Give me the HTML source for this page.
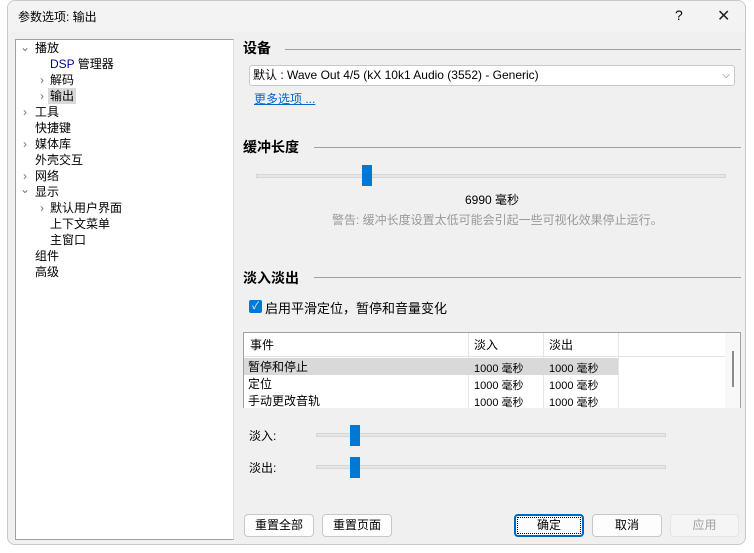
<!DOCTYPE html>
<html><head><meta charset="utf-8"><style>
*{box-sizing:border-box;margin:0;padding:0}
body{width:754px;height:553px;background:#fff;font-family:"Liberation Sans","Noto Sans CJK SC",sans-serif;font-size:12px;color:#000;position:relative;overflow:hidden}
.a{position:absolute}
.win{left:7px;top:0;width:739px;height:545px;background:#f0f0f0;border:1px solid #c8c8c8;border-radius:8px;overflow:hidden}
.title{left:0;top:0;width:100%;height:31px;background:#f3f3f3}
.tree{left:7px;top:38px;width:219px;height:501px;background:#fff;border:1px solid #a0a0a0;border-right-color:#e0e0e0}
.ti{position:absolute;height:16px;line-height:16px;font-size:12px}
.ar{position:absolute;color:#777;font-size:12px;line-height:14px}
.hd{font-weight:bold;font-size:14px}
.line{height:1px;background:#a0a0a0}
.btn{position:absolute;height:23px;border:1px solid #c8c8c8;border-radius:4px;background:#fdfdfd;text-align:center;line-height:21px;font-size:12px}
.track{position:absolute;height:4px;background:#e6e6e6;border:1px solid #d6d6d6}
.thumb{position:absolute;width:10px;height:21px;background:#0078d4}
</style></head><body>
<div class="a win">
 <div class="a title"></div>
 <div class="a" style="left:10px;top:7px;font-size:12px">参数选项: 输出</div>
 <div class="a" style="left:667px;top:6px;font-size:14px">?</div>
 <div class="a" style="left:709px;top:5px;font-size:16px;font-weight:300;color:#222">✕</div>
 <div class="a tree">
  <span class="ar" style="left:4px;top:0px">⌄</span><div class="ti" style="left:19px;top:0px">播放</div>
  <div class="ti" style="left:34px;top:16px"><span style="color:#0000a0">DSP</span> 管理器</div>
  <span class="ar" style="left:24px;top:33px">›</span><div class="ti" style="left:34px;top:32px">解码</div>
  <span class="ar" style="left:24px;top:49px">›</span><div class="ti" style="left:32px;top:48px;background:#d9d9d9;padding:0 2px">输出</div>
  <span class="ar" style="left:7px;top:65px">›</span><div class="ti" style="left:19px;top:64px">工具</div>
  <div class="ti" style="left:19px;top:80px">快捷键</div>
  <span class="ar" style="left:7px;top:97px">›</span><div class="ti" style="left:19px;top:96px">媒体库</div>
  <div class="ti" style="left:19px;top:112px">外壳交互</div>
  <span class="ar" style="left:7px;top:129px">›</span><div class="ti" style="left:19px;top:128px">网络</div>
  <span class="ar" style="left:4px;top:142px">⌄</span><div class="ti" style="left:19px;top:144px">显示</div>
  <span class="ar" style="left:24px;top:161px">›</span><div class="ti" style="left:34px;top:160px">默认用户界面</div>
  <div class="ti" style="left:34px;top:176px">上下文菜单</div>
  <div class="ti" style="left:34px;top:192px">主窗口</div>
  <div class="ti" style="left:19px;top:208px">组件</div>
  <div class="ti" style="left:19px;top:224px">高级</div>
 </div>
 <div class="a hd" style="left:235px;top:37px">设备</div>
 <div class="a line" style="left:277px;top:48px;width:456px"></div>
 <div class="a" style="left:241px;top:64px;width:486px;height:21px;background:#fff;border:1px solid #c8c8c8;border-radius:3px;line-height:19px;padding-left:3px;font-size:12px">默认 : Wave Out 4/5 (kX 10k1 Audio (3552) - Generic)<span style="position:absolute;right:4px;top:0;color:#666;font-size:10px">⌵</span></div>
 <div class="a" style="left:246px;top:89px;color:#0066cc;text-decoration:underline;font-size:12px">更多选项 ...</div>
 <div class="a hd" style="left:235px;top:136px">缓冲长度</div>
 <div class="a line" style="left:306px;top:146px;width:427px"></div>
 <div class="track" style="left:248px;top:173px;width:470px"></div>
 <div class="thumb" style="left:354px;top:164px"></div>
 <div class="a" style="left:457px;top:190px;font-size:12px">6990 毫秒</div>
 <div class="a" style="left:324px;top:210px;color:#999;font-size:12px">警告: 缓冲长度设置太低可能会引起一些可视化效果停止运行。</div>
 <div class="a hd" style="left:235px;top:267px">淡入淡出</div>
 <div class="a line" style="left:306px;top:276px;width:427px"></div>
 <div class="a" style="left:241px;top:299px;width:13px;height:13px;background:#0078d4;border-radius:2px;color:#fff;font-size:10px;line-height:13px;text-align:center">✓</div>
 <div class="a" style="left:257px;top:297px;font-size:13px">启用平滑定位，暂停和音量变化</div>
 <div class="a" style="left:235px;top:331px;width:498px;height:76px;background:#fff;border:1px solid #a0a0a0;border-bottom:none;overflow:hidden">
  <div class="a" style="left:0;top:0;width:490px;height:24px;border-bottom:1px solid #e5e5e5"></div>
  <div class="a" style="left:224px;top:0;width:1px;height:76px;background:#e5e5e5"></div>
  <div class="a" style="left:299px;top:0;width:1px;height:76px;background:#e5e5e5"></div>
  <div class="a" style="left:374px;top:0;width:1px;height:76px;background:#e5e5e5"></div>
  <div class="a" style="left:6px;top:3px;font-size:12px">事件</div>
  <div class="a" style="left:230px;top:3px;font-size:12px">淡入</div>
  <div class="a" style="left:305px;top:3px;font-size:12px">淡出</div>
  <div class="a" style="left:0;top:25px;width:374px;height:17px;background:#d9d9d9"></div>
  <div class="a" style="left:4px;top:25px">暂停和停止</div><div class="a" style="left:230px;top:27px;font-size:11px">1000 毫秒</div><div class="a" style="left:305px;top:27px;font-size:11px">1000 毫秒</div>
  <div class="a" style="left:4px;top:42px">定位</div><div class="a" style="left:230px;top:44px;font-size:11px">1000 毫秒</div><div class="a" style="left:305px;top:44px;font-size:11px">1000 毫秒</div>
  <div class="a" style="left:4px;top:59px">手动更改音轨</div><div class="a" style="left:230px;top:61px;font-size:11px">1000 毫秒</div><div class="a" style="left:305px;top:61px;font-size:11px">1000 毫秒</div>
  <div class="a" style="left:481px;top:0;width:16px;height:76px;background:#f8f8f8"></div>
  <div class="a" style="left:488px;top:18px;width:2px;height:36px;background:#8a8a8a"></div>
 </div>
 <div class="a" style="left:241px;top:426px;font-size:12px">淡入:</div>
 <div class="track" style="left:308px;top:432px;width:350px"></div>
 <div class="thumb" style="left:342px;top:424px"></div>
 <div class="a" style="left:241px;top:458px;font-size:12px">淡出:</div>
 <div class="track" style="left:308px;top:464px;width:350px"></div>
 <div class="thumb" style="left:342px;top:456px"></div>
 <div class="btn" style="left:236px;top:513px;width:70px">重置全部</div>
 <div class="btn" style="left:314px;top:513px;width:70px">重置页面</div>
 <div class="btn" style="left:506px;top:513px;width:70px;border:2px solid #0067c0"><span style="display:block;border:1px dotted #000;margin:1px;line-height:15px">确定</span></div>
 <div class="btn" style="left:584px;top:513px;width:70px">取消</div>
 <div class="btn" style="left:662px;top:513px;width:69px;color:#a0a0a0;background:#f5f5f5;border-color:#e5e5e5">应用</div>
</div>
</body></html>
